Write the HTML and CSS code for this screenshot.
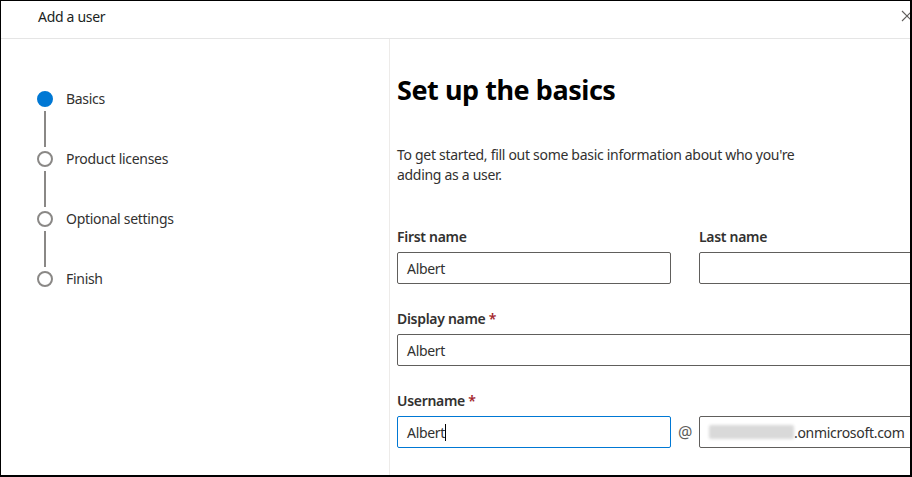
FILE: index.html
```html
<!DOCTYPE html>
<html lang="en">
<head>
<meta charset="utf-8">
<title>Add a user</title>
<link rel="stylesheet" href="styles.css">
</head>
<body>
<div class="frame">
  <header class="topbar">
    <span class="title">Add a user</span>
    <svg class="close" width="12" height="12" viewBox="0 0 12 12"><path d="M1 1 L11 11 M11 1 L1 11" stroke="#605e5c" stroke-width="1.1" fill="none"/></svg>
  </header>
  <div class="main">
    <nav class="steps">
      <div class="step">
        <div class="marker"><span class="dot active"></span><span class="line"></span></div>
        <span class="step-label">Basics</span>
      </div>
      <div class="step">
        <div class="marker"><span class="dot"></span><span class="line"></span></div>
        <span class="step-label">Product licenses</span>
      </div>
      <div class="step">
        <div class="marker"><span class="dot"></span><span class="line"></span></div>
        <span class="step-label">Optional settings</span>
      </div>
      <div class="step">
        <div class="marker"><span class="dot"></span></div>
        <span class="step-label">Finish</span>
      </div>
    </nav>
    <section class="content">
      <h1 class="heading">Set up the basics</h1>
      <p class="intro">To get started, fill out some basic information about who you're adding as a user.</p>
      <div class="grid">
        <div class="group">
          <div class="label">First name</div>
          <div class="field"><span class="value">Albert</span></div>
        </div>
        <div class="group">
          <div class="label">Last name</div>
          <div class="field"></div>
        </div>
        <div class="group wide">
          <div class="label">Display name <span class="req">*</span></div>
          <div class="field"><span class="value">Albert</span></div>
        </div>
        <div class="group wide">
          <div class="label">Username <span class="req">*</span></div>
          <div class="user-row">
            <div class="field focused"><span class="value">Albert</span><span class="caret"></span></div>
            <span class="at">@</span>
            <div class="field domain"><span class="blur"></span><span class="value">.onmicrosoft.com</span></div>
          </div>
        </div>
      </div>
    </section>
  </div>
</div>
</body>
</html>
```
FILE: styles.css
```css
* { box-sizing: border-box; }
html, body { margin: 0; padding: 0; background: #fff; }
body {
  font-family: "Segoe UI", "Noto Sans", "Open Sans", Lato, sans-serif;
  color: #323130;
  font-size: 14px;
  letter-spacing: -0.3px;
}
.frame {
  width: 912px;
  height: 477px;
  border: 1px solid #000;
  border-right-width: 2px;
  border-bottom-width: 2px;
  overflow: hidden;
  display: flex;
  flex-direction: column;
}
.topbar {
  height: 38px;
  flex: none;
  border-bottom: 1px solid #e5e5e5;
  display: flex;
  align-items: center;
  justify-content: space-between;
  padding-left: 37px;
  padding-right: 0;
}
.title { font-size: 14px; color: #201f1e; margin-top: -7px; }
.close { margin-right: -3px; margin-top: -7px; }
.main { flex: 1; display: flex; min-height: 0; }
.steps {
  width: 389px;
  flex: none;
  border-right: 1px solid #edebe9;
  padding: 52px 0 0 36px;
}
.step { display: flex; align-items: flex-start; height: 60px; }
.marker { width: 16px; display: flex; flex-direction: column; align-items: center; }
.dot {
  width: 16px; height: 16px; border-radius: 50%;
  border: 2px solid #8a8886; background: #fff;
}
.dot.active { background: #0078d4; border-color: #0078d4; }
.line { width: 2px; height: 36px; margin-top: 4px; background: #8a8886; }
.step-label { margin-left: 13px; line-height: 16px; color: #323130; }
.content {
  flex: 1;
  min-width: 0;
  padding-left: 7px;
  overflow: hidden;
}
.heading {
  margin: 33px 0 0;
  font-size: 27px;
  line-height: 36px;
  font-weight: 700;
  letter-spacing: -0.45px;
  color: #000;
  white-space: nowrap;
}
.intro {
  margin: 37px 0 0;
  width: 420px;
  line-height: 20px;
}
.grid {
  margin-top: 42px;
  display: grid;
  grid-template-columns: 274px 274px;
  column-gap: 28px;
  row-gap: 25px;
}
.wide { grid-column: 1 / 3; }
.label {
  font-weight: 600;
  line-height: 20px;
  margin-bottom: 5px;
  color: #323130;
}
.req { color: #a4262c; }
.field {
  height: 32px;
  border: 1px solid #605e5c;
  border-radius: 2px;
  display: flex;
  align-items: center;
  padding: 0 9px;
  white-space: nowrap;
}
.field.focused { border-color: #0078d4; }
.caret { width: 1px; height: 17px; background: #000; }
.user-row { display: flex; align-items: center; }
.user-row .field { width: 274px; flex: none; }
.at { width: 28px; text-align: center; color: #605e5c; font-size: 16px; }
.blur {
  width: 85px; height: 14px; background: #d9d9d9;
  filter: blur(1.5px);
  border-radius: 2px;
}
```
